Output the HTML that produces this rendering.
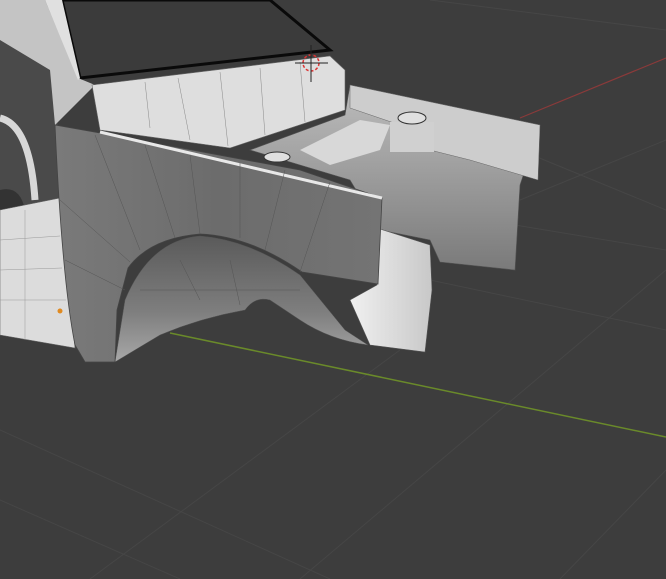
<!DOCTYPE html>
<html><head><meta charset="utf-8"><style>
html,body{margin:0;padding:0;background:#3d3d3d;width:666px;height:579px;overflow:hidden}
svg{display:block}
</style></head><body>
<svg width="666" height="579" viewBox="0 0 666 579" xmlns="http://www.w3.org/2000/svg">
<defs>
<linearGradient id="fg" x1="0" y1="0" x2="1" y2="0">
<stop offset="0" stop-color="#7a7a7a"/><stop offset="0.5" stop-color="#6c6c6c"/><stop offset="1" stop-color="#747474"/></linearGradient>
<linearGradient id="ib" x1="0" y1="0" x2="0" y2="1">
<stop offset="0" stop-color="#bdbdbd"/><stop offset="1" stop-color="#7a7a7a"/></linearGradient>
<linearGradient id="arch" x1="0" y1="0" x2="0" y2="1">
<stop offset="0" stop-color="#5a5a5a"/><stop offset="0.6" stop-color="#7e7e7e"/><stop offset="1" stop-color="#a8a8a8"/></linearGradient>
<linearGradient id="rp" x1="0" y1="0" x2="1" y2="0">
<stop offset="0" stop-color="#f0f0f0"/><stop offset="1" stop-color="#c8c8c8"/></linearGradient>
</defs>
<rect width="666" height="579" fill="#3d3d3d"/>
<g stroke="#464646" stroke-width="1" fill="none">
<line x1="0" y1="500" x2="180" y2="579"/>
<line x1="0" y1="430" x2="330" y2="579"/>
<line x1="300" y1="579" x2="666" y2="270"/>
<line x1="90" y1="579" x2="400" y2="350"/>
<line x1="430" y1="280" x2="666" y2="330"/>
<line x1="515" y1="225" x2="666" y2="250"/>
<line x1="520" y1="200" x2="666" y2="140"/>
<line x1="430" y1="0" x2="666" y2="30"/>
<line x1="520" y1="150" x2="666" y2="210"/>
<line x1="560" y1="579" x2="666" y2="470"/>
</g>
<line x1="170" y1="333" x2="666" y2="437" stroke="#6a8a2a" stroke-width="1.5"/>
<line x1="520" y1="118" x2="666" y2="58" stroke="#8a3a3a" stroke-width="1.2"/>
<polygon points="0,40 55,40 60,200 0,210" fill="#4a4a4a"/>
<path d="M0,118 Q30,125 35,200" stroke="#d8d8d8" stroke-width="7" fill="none"/>
<path d="M0,190 Q20,185 25,210 L0,215 Z" fill="#333"/>
<polygon points="0,210 60,198 75,348 0,335" fill="#dcdcdc" stroke="#666" stroke-width="0.6"/>
<g stroke="#999" stroke-width="0.5"><line x1="0" y1="240" x2="60" y2="236"/><line x1="0" y1="270" x2="62" y2="268"/><line x1="0" y1="300" x2="66" y2="300"/><line x1="25" y1="210" x2="25" y2="340"/></g>
<polygon points="62,0 270,0 330,50 80,78" fill="#3b3b3b" stroke="#0a0a0a" stroke-width="3"/>
<polygon points="0,0 45,0 78,78 95,85 80,100 55,125 50,70 0,40" fill="#c4c4c4"/>
<polygon points="45,0 62,0 80,78 78,80" fill="#e0e0e0"/>
<polygon points="92,85 330,56 345,70 345,110 230,148 100,130" fill="#dedede" stroke="#666" stroke-width="0.6"/>
<g stroke="#888" stroke-width="0.5"><line x1="145" y1="82" x2="150" y2="128"/><line x1="178" y1="78" x2="190" y2="140"/><line x1="220" y1="72" x2="228" y2="146"/><line x1="260" y1="68" x2="265" y2="135"/><line x1="300" y1="62" x2="305" y2="122"/></g>
<polygon points="350,85 540,125 520,185 515,270 440,262 430,240 380,230 350,180 300,165 250,150 345,115" fill="url(#ib)" stroke="#555" stroke-width="0.6"/>
<polygon points="350,85 540,125 538,180 470,160 430,150 400,125 350,108" fill="#cdcdcd" stroke="#666" stroke-width="0.5"/>
<polygon points="300,150 360,120 390,125 380,150 330,165" fill="#d8d8d8"/>
<rect x="390" y="122" width="44" height="30" fill="#d0d0d0"/>
<ellipse cx="412" cy="118" rx="14" ry="6" fill="#e0e0e0" stroke="#333"/>
<ellipse cx="277" cy="157" rx="13" ry="5" fill="#e0e0e0" stroke="#333"/>
<polygon points="377,228 430,245 432,290 425,352 370,345 350,300 377,285" fill="url(#rp)" stroke="#555" stroke-width="0.6"/>
<path d="M125,300 Q150,240 200,236 Q250,240 300,275 L345,330 L368,345 Q330,340 300,320 L270,300 Q255,296 245,310 Q200,318 160,335 L115,362 Z" fill="url(#arch)" stroke="#555" stroke-width="0.5"/>
<path d="M55,125 L100,133 L300,170 L382,198 L378,284 L302,272 Q250,236 200,234 Q150,238 128,268 L117,310 L115,362 L85,362 L75,345 Q62,280 55,125 Z" fill="url(#fg)" stroke="#444" stroke-width="0.8"/>
<line x1="100" y1="132" x2="382" y2="198" stroke="#e8e8e8" stroke-width="3"/>
<g stroke="#555" stroke-width="0.5" fill="none">
<line x1="95" y1="135" x2="140" y2="250"/><line x1="145" y1="145" x2="175" y2="238"/>
<line x1="190" y1="155" x2="200" y2="234"/><line x1="240" y1="163" x2="240" y2="238"/>
<line x1="285" y1="170" x2="265" y2="250"/><line x1="330" y1="182" x2="300" y2="272"/>
<line x1="60" y1="200" x2="130" y2="262"/><line x1="65" y1="260" x2="125" y2="290"/>
<line x1="180" y1="260" x2="200" y2="300"/><line x1="230" y1="260" x2="240" y2="305"/>
<line x1="140" y1="290" x2="300" y2="290"/>
</g>
<circle cx="60" cy="311" r="2.5" fill="#e08a20"/>
<circle cx="311" cy="63" r="8" fill="none" stroke="#d33" stroke-width="1.5" stroke-dasharray="3 2"/>
<line x1="311" y1="45" x2="311" y2="82" stroke="#222" stroke-width="1"/>
<line x1="295" y1="63" x2="328" y2="63" stroke="#222" stroke-width="1"/>
</svg>
</body></html>
